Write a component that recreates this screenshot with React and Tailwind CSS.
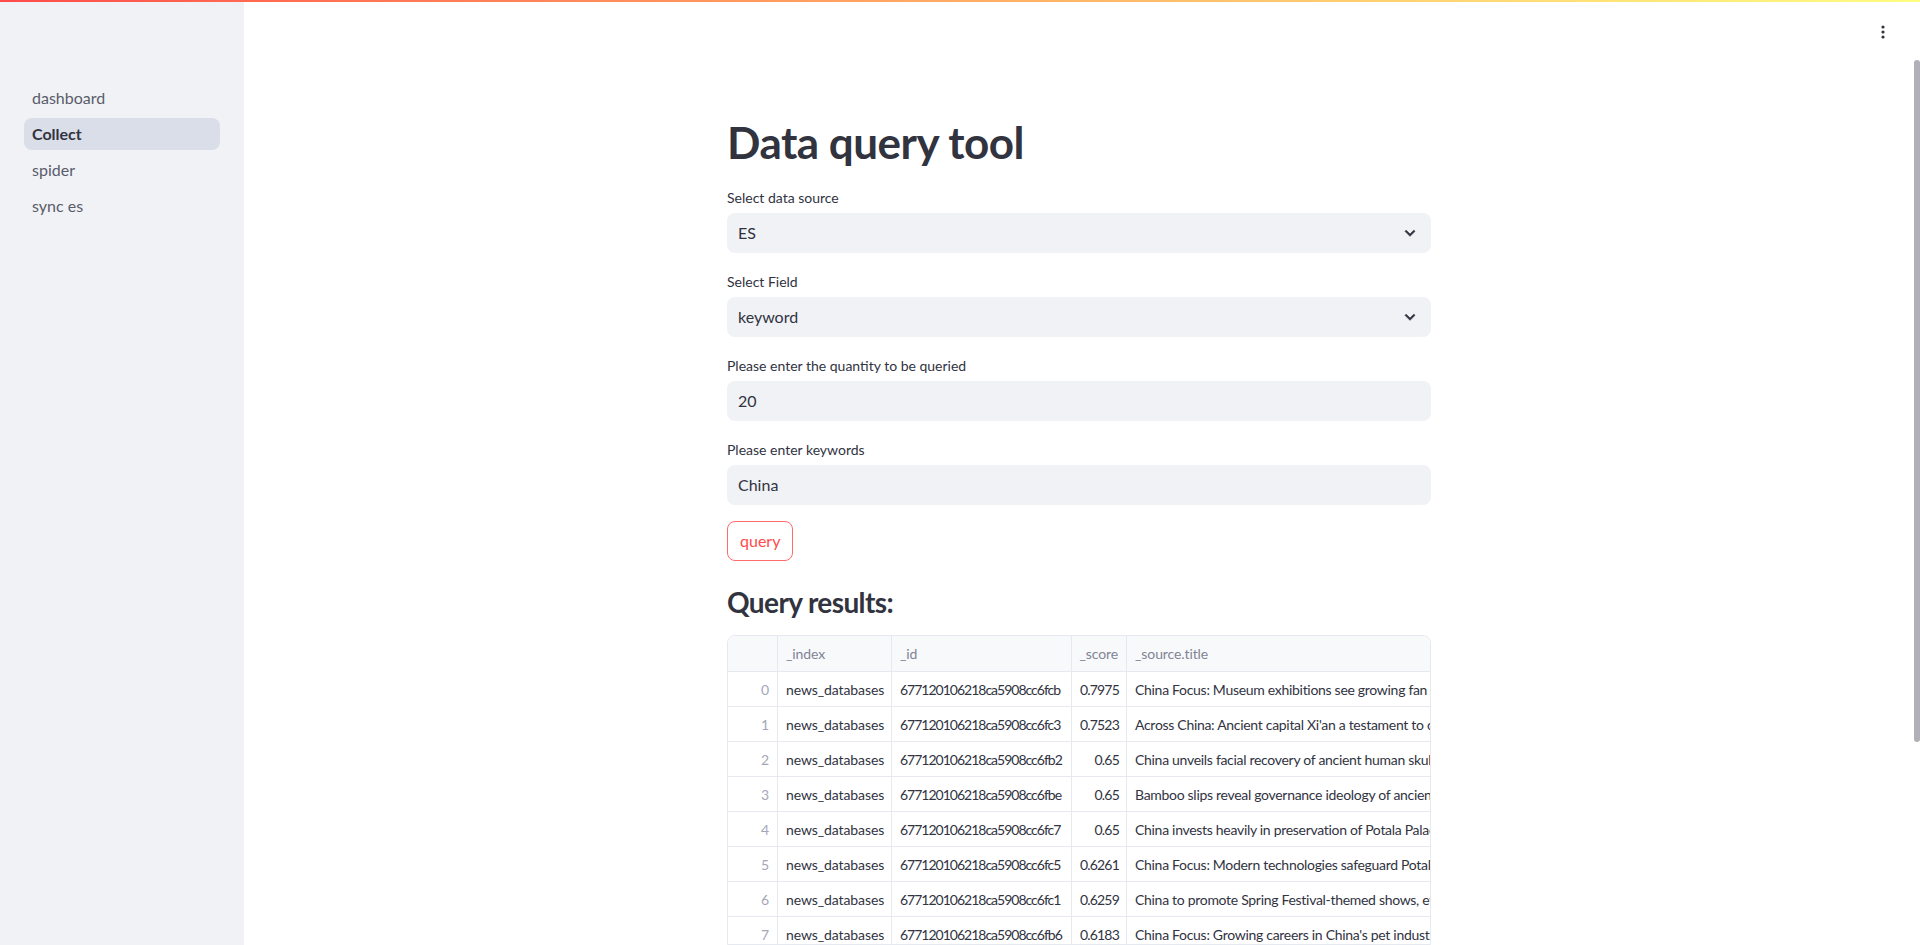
import React from "react";

const rows = [
  ["0", "news_databases", "677120106218ca5908cc6fcb", "0.7975", "China Focus: Museum exhibitions see growing fan base among young Chinese"],
  ["1", "news_databases", "677120106218ca5908cc6fc3", "0.7523", "Across China: Ancient capital Xi'an a testament to cultural exchanges"],
  ["2", "news_databases", "677120106218ca5908cc6fb2", "0.65", "China unveils facial recovery of ancient human skull fossils"],
  ["3", "news_databases", "677120106218ca5908cc6fbe", "0.65", "Bamboo slips reveal governance ideology of ancient China"],
  ["4", "news_databases", "677120106218ca5908cc6fc7", "0.65", "China invests heavily in preservation of Potala Palace"],
  ["5", "news_databases", "677120106218ca5908cc6fc5", "0.6261", "China Focus: Modern technologies safeguard Potala Palace"],
  ["6", "news_databases", "677120106218ca5908cc6fc1", "0.6259", "China to promote Spring Festival-themed shows, events"],
  ["7", "news_databases", "677120106218ca5908cc6fb6", "0.6183", "China Focus: Growing careers in China's pet industry"],
];

function Chevron() {
  return (
    <svg width="20" height="20" viewBox="0 0 24 24" className="shrink-0">
      <path d="M16.59 8.59L12 13.17 7.41 8.59 6 10l6 6 6-6z" fill="#31333f" stroke="#31333f" strokeWidth="0.8" />
    </svg>
  );
}

function Field({ label, value, select }) {
  return (
    <div className="flex flex-col">
      <div className="h-[24px] mb-[4px] flex items-center text-[14px] text-[#31333f]">{label}</div>
      <div className="h-[40px] rounded-[8px] bg-[#f0f2f6] flex items-center pl-[11px] pr-[11px] text-[16px] text-[#31333f]">
        <span className="flex-1">{value}</span>
        {select && <Chevron />}
      </div>
    </div>
  );
}

export default function App() {
  return (
    <div className="relative flex h-[945px] w-[1920px] overflow-hidden bg-white font-['Lato',sans-serif] text-[#31333f]">
      <div className="absolute top-0 left-0 right-0 h-[2px] bg-gradient-to-r from-[#ff4b4b] to-[#fffd80] z-10" />

      {/* Sidebar */}
      <aside className="w-[244px] shrink-0 bg-[#f0f2f6] pt-[82px] px-[24px] flex flex-col gap-[4px]">
        <div className="h-[32px] flex items-center px-[8px] rounded-[8px] text-[16px] text-[#5a5c69]">dashboard</div>
        <div className="h-[32px] flex items-center px-[8px] rounded-[8px] text-[16px] font-bold text-[#31333f] bg-[#dadee8]">Collect</div>
        <div className="h-[32px] flex items-center px-[8px] rounded-[8px] text-[16px] text-[#5a5c69]">spider</div>
        <div className="h-[32px] flex items-center px-[8px] rounded-[8px] text-[16px] text-[#5a5c69]">sync es</div>
      </aside>

      {/* Main */}
      <main className="relative flex-1 flex justify-center">
        <div className="absolute top-[23px] right-[23px]">
          <svg width="16" height="20" viewBox="0 0 16 20">
            <circle cx="8" cy="4" r="1.6" fill="#31333f" />
            <circle cx="8" cy="9" r="1.6" fill="#31333f" />
            <circle cx="8" cy="14" r="1.6" fill="#31333f" />
          </svg>
        </div>
        <div className="w-[704px] pt-[96px] flex flex-col gap-[16px]">
          <h1 className="pt-[20px] pb-[1px] leading-[52px] text-[44px] font-bold text-[#31333f] tracking-[-0.5px]">Data query tool</h1>
          <Field label="Select data source" value="ES" select />
          <Field label="Select Field" value="keyword" select />
          <Field label="Please enter the quantity to be queried" value="20" />
          <Field label="Please enter keywords" value="China" />
          <div>
            <button className="h-[40px] px-[12px] rounded-[8px] border border-[#ff6b6b] bg-white text-[16px] text-[#ff4b4b]">query</button>
          </div>
          <h3 className="pt-[8px] leading-[34px] text-[28px] font-bold text-[#31333f] tracking-[-0.6px]">Query results:</h3>
          <div className="border border-[#e6e9ef] rounded-t-[8px] overflow-hidden text-[14px] tracking-[-0.1px]">
            <div className="flex h-[36px] bg-[#f8f9fb] border-b border-[#e6e9ef] text-[#808495]">
              <div className="w-[50px] shrink-0 border-r border-[#e6e9ef]" />
              <div className="w-[114px] shrink-0 border-r border-[#e6e9ef] flex items-center px-[8px]">_index</div>
              <div className="w-[180px] shrink-0 border-r border-[#e6e9ef] flex items-center px-[8px]">_id</div>
              <div className="w-[55px] shrink-0 border-r border-[#e6e9ef] flex items-center justify-end px-[8px]">_score</div>
              <div className="flex-1 flex items-center px-[8px] whitespace-nowrap overflow-hidden">_source.title</div>
            </div>
            {rows.map((r) => (
              <div key={r[0]} className="flex h-[35px] border-b border-[#e6e9ef]">
                <div className="w-[50px] shrink-0 border-r border-[#e6e9ef] flex items-center justify-end px-[8px] text-[#a3a8b8]">{r[0]}</div>
                <div className="w-[114px] shrink-0 border-r border-[#e6e9ef] flex items-center px-[8px] whitespace-nowrap overflow-hidden">{r[1]}</div>
                <div className="w-[180px] shrink-0 border-r border-[#e6e9ef] flex items-center px-[8px] whitespace-nowrap overflow-hidden tracking-[-1px]">{r[2]}</div>
                <div className="w-[55px] shrink-0 border-r border-[#e6e9ef] flex items-center justify-end px-[7px] whitespace-nowrap tracking-[-0.8px]">{r[3]}</div>
                <div className="flex-1 flex items-center px-[8px] whitespace-nowrap overflow-hidden tracking-[-0.3px]">{r[4]}</div>
              </div>
            ))}
          </div>
        </div>
      </main>

      {/* Scrollbar */}
      <div className="w-[6px] shrink-0 pt-[60px]">
        <div className="h-[682px] w-[6px] rounded-full bg-[#b0b0b6]" />
      </div>
    </div>
  );
}
